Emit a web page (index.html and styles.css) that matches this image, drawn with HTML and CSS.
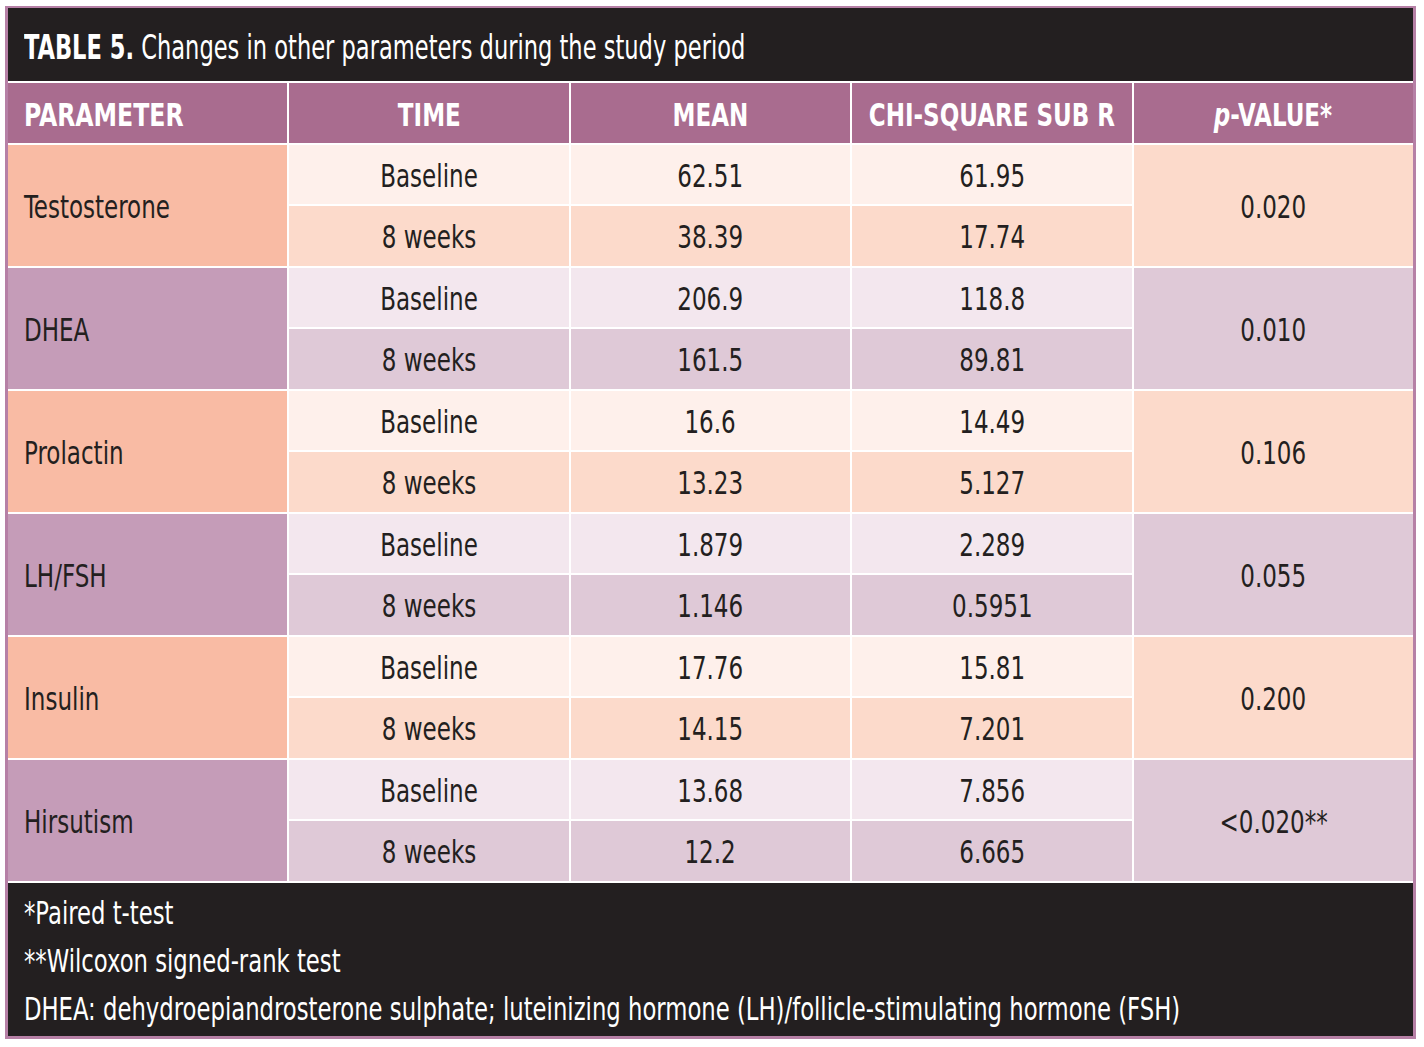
FILE: index.html
```html
<!DOCTYPE html>
<html lang="en">
<head>
<meta charset="utf-8">
<title>Table 5</title>
<link rel="stylesheet" href="styles.css">
</head>
<body>
<div class="frame">
  <div class="title"><span class="t"><b>TABLE 5.</b> Changes in other parameters during the study period</span></div>
  <div class="table">
    <div class="th left"><span class="t">PARAMETER</span></div>
    <div class="th"><span class="t">TIME</span></div>
    <div class="th"><span class="t">MEAN</span></div>
    <div class="th"><span class="t">CHI-SQUARE SUB R</span></div>
    <div class="th"><span class="t"><i>p</i>-VALUE*</span></div>

    <div class="param o"><span class="t">Testosterone</span></div>
    <div class="cell o1"><span class="t">Baseline</span></div><div class="cell o1"><span class="t">62.51</span></div><div class="cell o1"><span class="t">61.95</span></div>
    <div class="cell o2 pcol"><span class="t">0.020</span></div>
    <div class="cell o2"><span class="t">8 weeks</span></div><div class="cell o2"><span class="t">38.39</span></div><div class="cell o2"><span class="t">17.74</span></div>

    <div class="param p"><span class="t">DHEA</span></div>
    <div class="cell p1"><span class="t">Baseline</span></div><div class="cell p1"><span class="t">206.9</span></div><div class="cell p1"><span class="t">118.8</span></div>
    <div class="cell p2 pcol"><span class="t">0.010</span></div>
    <div class="cell p2"><span class="t">8 weeks</span></div><div class="cell p2"><span class="t">161.5</span></div><div class="cell p2"><span class="t">89.81</span></div>

    <div class="param o"><span class="t">Prolactin</span></div>
    <div class="cell o1"><span class="t">Baseline</span></div><div class="cell o1"><span class="t">16.6</span></div><div class="cell o1"><span class="t">14.49</span></div>
    <div class="cell o2 pcol"><span class="t">0.106</span></div>
    <div class="cell o2"><span class="t">8 weeks</span></div><div class="cell o2"><span class="t">13.23</span></div><div class="cell o2"><span class="t">5.127</span></div>

    <div class="param p"><span class="t">LH/FSH</span></div>
    <div class="cell p1"><span class="t">Baseline</span></div><div class="cell p1"><span class="t">1.879</span></div><div class="cell p1"><span class="t">2.289</span></div>
    <div class="cell p2 pcol"><span class="t">0.055</span></div>
    <div class="cell p2"><span class="t">8 weeks</span></div><div class="cell p2"><span class="t">1.146</span></div><div class="cell p2"><span class="t">0.5951</span></div>

    <div class="param o"><span class="t">Insulin</span></div>
    <div class="cell o1"><span class="t">Baseline</span></div><div class="cell o1"><span class="t">17.76</span></div><div class="cell o1"><span class="t">15.81</span></div>
    <div class="cell o2 pcol"><span class="t">0.200</span></div>
    <div class="cell o2"><span class="t">8 weeks</span></div><div class="cell o2"><span class="t">14.15</span></div><div class="cell o2"><span class="t">7.201</span></div>

    <div class="param p"><span class="t">Hirsutism</span></div>
    <div class="cell p1"><span class="t">Baseline</span></div><div class="cell p1"><span class="t">13.68</span></div><div class="cell p1"><span class="t">7.856</span></div>
    <div class="cell p2 pcol"><span class="t">&lt;0.020**</span></div>
    <div class="cell p2"><span class="t">8 weeks</span></div><div class="cell p2"><span class="t">12.2</span></div><div class="cell p2"><span class="t">6.665</span></div>
  </div>
  <div class="notes">
    <div class="line"><span class="t">*Paired t-test</span></div>
    <div class="line"><span class="t">**Wilcoxon signed-rank test</span></div>
    <div class="line"><span class="t">DHEA: dehydroepiandrosterone sulphate; luteinizing hormone (LH)/follicle-stimulating hormone (FSH)</span></div>
  </div>
</div>
</body>
</html>
```

FILE: styles.css
```css
html, body {
  margin: 0;
  padding: 0;
  background: #ffffff;
}

body {
  font-family: "DejaVu Sans Condensed", "DejaVu Sans", "Liberation Sans", sans-serif;
  color: #231f20;
}

/* condensed face: narrow each text run to the reference's letter widths */
.t {
  display: inline-block;
  white-space: nowrap;
  transform: scaleX(0.8);
  transform-origin: center center;
}

.frame {
  margin: 6px 0 0 5px;
  width: 1405px;
  border-left: 3px solid #b680a6;
  border-right: 3px solid #b680a6;
  border-top: 2px solid #b680a6;
  border-bottom: 3px solid #b680a6;
  background: #ffffff;
  display: flex;
  flex-direction: column;
  gap: 2px;
}

.title {
  height: 73px;
  background: #231f20;
  color: #ffffff;
  display: flex;
  align-items: center;
  padding: 6px 0 0 16px;
  box-sizing: border-box;
  font-size: 33px;
  overflow: hidden;
}

.title .t {
  transform: scaleX(0.76);
  transform-origin: left center;
}

.title b {
  font-weight: 700;
}

.table {
  display: grid;
  grid-template-columns: repeat(5, minmax(0, 1fr));
  grid-template-rows: 60px repeat(6, 59px 60px);
  gap: 2px;
}

.th {
  background: #a96c8f;
  color: #ffffff;
  font-weight: 700;
  font-size: 32px;
  display: flex;
  align-items: center;
  justify-content: center;
  padding-top: 4px;
  box-sizing: border-box;
}

.th.left {
  justify-content: flex-start;
  padding-left: 16px;
}

.th.left .t {
  transform: scaleX(0.82);
  transform-origin: left center;
}

.param {
  display: flex;
  align-items: center;
  padding: 2px 0 0 16px;
  box-sizing: border-box;
  font-size: 32px;
  grid-row: span 2;
}

.param .t {
  transform-origin: left center;
}

.param.o { background: #f9bba4; }
.param.p { background: #c59cb8; }

.cell {
  display: flex;
  align-items: center;
  justify-content: center;
  padding-top: 2px;
  box-sizing: border-box;
  font-size: 32px;
}

.cell.pcol {
  grid-column: 5;
  grid-row: span 2;
}

.o1 { background: #fef0eb; }
.o2 { background: #fcdacb; }
.p1 { background: #f3e7ee; }
.p2 { background: #dfc9d7; }

.notes {
  height: 153px;
  background: #231f20;
  color: #ffffff;
  box-sizing: border-box;
  padding: 6px 0 0 16px;
  font-size: 32px;
  overflow: hidden;
}

.notes .line {
  height: 48px;
  display: flex;
  align-items: center;
}

.notes .t {
  transform: scaleX(0.79);
  transform-origin: left center;
}
```
